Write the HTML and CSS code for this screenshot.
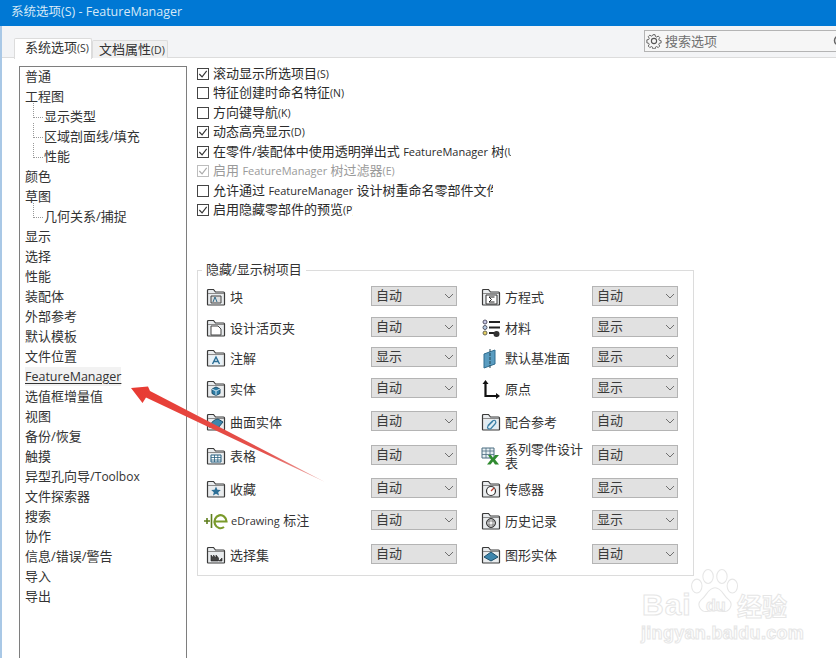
FILE: index.html
```html
<!DOCTYPE html>
<html lang="zh-CN">
<head>
<meta charset="utf-8">
<title>系统选项(S) - FeatureManager</title>
<link rel="stylesheet" href="styles.css">
</head>
<body>
<svg class="defs" width="0" height="0" aria-hidden="true">
  <defs>
    <symbol id="folder" viewBox="0 0 20 18">
      <path d="M1.500 16.500V2.500q0-1 1-1h5l2 2.500h8q1 0 1 1v11.500q0 .5-.5.5H2q-.5 0-.5-.5z" fill="#e9ecee" stroke="#3a3a3a" stroke-width="1.200"/>
      <path d="M2 5.500h16" stroke="#8a8a8a" stroke-width="1"/>
    </symbol>
    <symbol id="chev" viewBox="0 0 10 6">
      <path d="M1 1l4 4 4-4" fill="none" stroke="#6f6f6f" stroke-width="1"/>
    </symbol>
    <symbol id="tick" viewBox="0 0 13 13">
      <path d="M2.500 6.500l3 3.200 5-6.500" fill="none" stroke="currentColor" stroke-width="1.200"/>
    </symbol>
  </defs>
</svg>

<div class="window">
  <header class="titlebar">系统选项(S) - FeatureManager</header>
  <div class="tabband">
    <div class="tabs">
      <div class="tab tab-active">系统选项<small>(S)</small></div>
      <div class="tab">文档属性<small>(D)</small></div>
    </div>
    <div class="search">
      <svg class="gear" viewBox="0 0 16 16"><path d="M6.800 1h2.400l.4 2 1.300.6 1.800-1.100 1.700 1.700-1.100 1.800.6 1.300 2 .4v2.400l-2 .4-.6 1.300 1.100 1.800-1.700 1.700-1.800-1.100-1.300.6-.4 2H6.800l-.4-2-1.300-.6-1.800 1.100-1.700-1.700 1.100-1.800-.6-1.300-2-.4V6.700l2-.4.6-1.300-1.100-1.800 1.700-1.700 1.800 1.100 1.300-.6z" fill="none" stroke="#555" stroke-width="1" transform="translate(.8 .8) scale(.9)"/><circle cx="8" cy="8" r="2.600" fill="none" stroke="#555" stroke-width="1.100"/></svg>
      <span>搜索选项</span>
      <svg class="mag" viewBox="0 0 3 12"><circle cx="6" cy="5.500" r="4.500" fill="none" stroke="#666" stroke-width="1.500"/></svg>
    </div>
  </div>

  <main class="content">
    <nav class="tree">
      <div class="node">普通</div>
      <div class="node">工程图</div>
      <div class="node child">显示类型</div>
      <div class="node child">区域剖面线/填充</div>
      <div class="node child last">性能</div>
      <div class="node">颜色</div>
      <div class="node">草图</div>
      <div class="node child last">几何关系/捕捉</div>
      <div class="node">显示</div>
      <div class="node">选择</div>
      <div class="node">性能</div>
      <div class="node">装配体</div>
      <div class="node">外部参考</div>
      <div class="node">默认模板</div>
      <div class="node">文件位置</div>
      <div class="node selected"><span>FeatureManager</span></div>
      <div class="node">选值框增量值</div>
      <div class="node">视图</div>
      <div class="node">备份/恢复</div>
      <div class="node">触摸</div>
      <div class="node">异型孔向导/<span class="en-tree">Toolbox</span></div>
      <div class="node">文件探索器</div>
      <div class="node">搜索</div>
      <div class="node">协作</div>
      <div class="node">信息/错误/警告</div>
      <div class="node">导入</div>
      <div class="node">导出</div>
    </nav>

    <section class="options">
      <div class="checks">
        <div class="check"><i class="box"><svg viewBox="0 0 13 13"><use href="#tick"/></svg></i><span>滚动显示所选项目<small>(S)</small></span></div>
        <div class="check"><i class="box"></i><span>特征创建时命名特征<small>(N)</small></span></div>
        <div class="check"><i class="box"></i><span>方向键导航<small>(K)</small></span></div>
        <div class="check"><i class="box"><svg viewBox="0 0 13 13"><use href="#tick"/></svg></i><span>动态高亮显示<small>(D)</small></span></div>
        <div class="check"><i class="box"><svg viewBox="0 0 13 13"><use href="#tick"/></svg></i><span class="clip clip-a">在零件/装配体中使用透明弹出式 <span class="en">FeatureManager</span> 树<small>(U)</small></span></div>
        <div class="check disabled"><i class="box"><svg viewBox="0 0 13 13"><use href="#tick"/></svg></i><span>启用 <span class="en">FeatureManager</span> 树过滤器<small>(E)</small></span></div>
        <div class="check"><i class="box"></i><span class="clip clip-b">允许通过 <span class="en">FeatureManager</span> 设计树重命名零部件文件</span></div>
        <div class="check"><i class="box"><svg viewBox="0 0 13 13"><use href="#tick"/></svg></i><span class="clip clip-c">启用隐藏零部件的预览<small>(P)</small></span></div>
      </div>

      <fieldset class="group">
        <legend>隐藏/显示树项目</legend>
        <div class="grid">
          <div class="item"><svg class="ico"><use href="#folder"/><path d="M5 8h10v7H5z" fill="#ddd" stroke="#444"/><path d="M7 14l2-5 2 5" fill="none" stroke="#2d6a8a"/></svg><span class="lab">块</span><div class="sel">自动<svg><use href="#chev"/></svg></div></div>
          <div class="item"><svg class="ico"><use href="#folder"/><path d="M5 7h11v9H5z" fill="#fff" stroke="#333"/><path d="M13.500 9H8l2.500 2.500L8 14h5.500" fill="none" stroke="#222"/></svg><span class="lab">方程式</span><div class="sel">自动<svg><use href="#chev"/></svg></div></div>

          <div class="item"><svg class="ico"><use href="#folder"/><path d="M5 7h7l3 3v6H5z" fill="#fff" stroke="#444"/></svg><span class="lab">设计活页夹</span><div class="sel">自动<svg><use href="#chev"/></svg></div></div>
          <div class="item"><svg class="ico"><circle cx="4" cy="3" r="2" fill="#c8c8e8" stroke="#556"/><circle cx="4" cy="8.500" r="2" fill="#b8d0e8" stroke="#556"/><circle cx="4" cy="14" r="2" fill="#e8d060" stroke="#665"/><path d="M8 3h11M8 8.500h11M8 14h5" stroke="#222" stroke-width="2"/><circle cx="15.500" cy="15" r="3" fill="#333"/></svg><span class="lab">材料</span><div class="sel">显示<svg><use href="#chev"/></svg></div></div>

          <div class="item"><svg class="ico"><use href="#folder"/><path d="M4 7h12v9H4z" fill="#e8f2f8"/><path d="M6.500 15l3.500-7 3.500 7M8 12.500h4" fill="none" stroke="#2d6f96" stroke-width="1.400"/></svg><span class="lab">注解</span><div class="sel">显示<svg><use href="#chev"/></svg></div></div>
          <div class="item"><svg class="ico"><path d="M3 5l11-4v14L3 19z" fill="#5a9cc0" stroke="#2f6d90"/><path d="M9 0v19" stroke="#245" stroke-dasharray="3 1"/></svg><span class="lab">默认基准面</span><div class="sel">显示<svg><use href="#chev"/></svg></div></div>

          <div class="item"><svg class="ico"><use href="#folder"/><path d="M10 7l4 2v4.500l-4 2-4-2V9z" fill="#2e7ea8" stroke="#1d4f6a"/><path d="M6 9l4 2 4-2M10 11v4.500" fill="none" stroke="#cfe6f2"/></svg><span class="lab">实体</span><div class="sel">自动<svg><use href="#chev"/></svg></div></div>
          <div class="item"><svg class="ico"><path d="M4.500 2v14H16" fill="none" stroke="#111" stroke-width="2.200"/><path d="M4.500 0l-3 4h6zM19 16l-4-3v6z" fill="#111"/></svg><span class="lab">原点</span><div class="sel">显示<svg><use href="#chev"/></svg></div></div>

          <div class="item"><svg class="ico"><use href="#folder"/><path d="M3 14q4-8 9-8l5 3-5 6z" fill="#3e86ad" stroke="#1d4f6a"/></svg><span class="lab">曲面实体</span><div class="sel">自动<svg><use href="#chev"/></svg></div></div>
          <div class="item"><svg class="ico"><use href="#folder"/><path d="M4 7h12v9H4z" fill="#dfecf3"/><path d="M7 12.500l4.500-4.500q2-1.500 3 0t-.5 3L10 15.500q-2 1-3 0t0-2.500l5-5" fill="none" stroke="#3a7ea4" stroke-width="1.200"/></svg><span class="lab">配合参考</span><div class="sel">自动<svg><use href="#chev"/></svg></div></div>

          <div class="item"><svg class="ico"><use href="#folder"/><path d="M5 8h10v7H5z" fill="#fff" stroke="#245f80"/><path d="M5 10.500h10M5 13h10M8.500 8v7M11.800 8v7" stroke="#245f80" stroke-width=".8"/></svg><span class="lab">表格</span><div class="sel">自动<svg><use href="#chev"/></svg></div></div>
          <div class="item"><svg class="ico"><path d="M1 1h12v10H1z" fill="#e8f0f4" stroke="#4b6d80"/><path d="M1 4h12M1 7.500h12M5 1v10M9 1v10" stroke="#4b6d80" stroke-width=".8"/><path d="M7 8h3l2 3 2-3h4l-4 4.500 4 5h-4l-2-3-2.500 3H6l4-5z" fill="#2f8a2f"/></svg><span class="lab lab-wrap">系列零件设计表</span><div class="sel">自动<svg><use href="#chev"/></svg></div></div>

          <div class="item"><svg class="ico"><use href="#folder"/><path d="M10 6.500l1.400 3.200 3.400.3-2.600 2.200.8 3.300-3-1.800-3 1.800.8-3.300L5.200 10l3.400-.3z" fill="#2d6f96"/></svg><span class="lab">收藏</span><div class="sel">自动<svg><use href="#chev"/></svg></div></div>
          <div class="item"><svg class="ico"><use href="#folder"/><circle cx="10" cy="11" r="4.500" fill="#fff" stroke="#333" stroke-width="1.200"/><path d="M10 11l3-3" stroke="#c03a2a" stroke-width="1.200"/></svg><span class="lab">传感器</span><div class="sel">显示<svg><use href="#chev"/></svg></div></div>

          <div class="item"><svg class="ico ico-e" viewBox="0 0 24 20"><path d="M0 10h6M3 7v6M7.500 3v14" stroke="#5d7d1c" stroke-width="1.600" fill="none"/><path d="M11 10.500h11.500a6 6.500 0 1 0-2.500 5.500" fill="none" stroke="#7a9a2a" stroke-width="2.200"/></svg><span class="lab lab-e"><span class="en">eDrawing</span> 标注</span><div class="sel">自动<svg><use href="#chev"/></svg></div></div>
          <div class="item"><svg class="ico"><use href="#folder"/><circle cx="10" cy="11" r="4.500" fill="#999" stroke="#333"/><circle cx="10" cy="11" r="1.200" fill="#fff"/><path d="M10 7v8M6 11h8" stroke="#eee" stroke-width=".8"/></svg><span class="lab">历史记录</span><div class="sel">显示<svg><use href="#chev"/></svg></div></div>

          <div class="item"><svg class="ico"><use href="#folder"/><path d="M5 15V9l2.500 3V9l2.500 3V9l2.500 3v3zM13 15l3-3v3z" fill="#444" stroke="#222" stroke-width=".6"/></svg><span class="lab">选择集</span><div class="sel">自动<svg><use href="#chev"/></svg></div></div>
          <div class="item"><svg class="ico"><use href="#folder"/><path d="M3 11l7-5 7 5-7 4z" fill="#3e86ad" stroke="#1d4f6a"/></svg><span class="lab">图形实体</span><div class="sel">自动<svg><use href="#chev"/></svg></div></div>
        </div>
      </fieldset>
    </section>
  </main>
</div>

<svg class="arrow" viewBox="0 0 836 658" aria-hidden="true">
  <defs>
    <linearGradient id="arrowfill" gradientUnits="userSpaceOnUse" x1="131" y1="388" x2="325" y2="482">
      <stop offset="0" stop-color="#e83a32"/><stop offset=".7" stop-color="#e4534e"/><stop offset="1" stop-color="#eeb5b2"/>
    </linearGradient>
  </defs>
  <path d="M131 388L148 386.500 150 391 325 482 146 397.500 142.500 403z" fill="url(#arrowfill)"/>
</svg>

<div class="watermark" aria-hidden="true">
  <svg class="paw" viewBox="0 0 60 56"><ellipse cx="9" cy="20" rx="6" ry="8"/><ellipse cx="22" cy="9" rx="6" ry="8"/><ellipse cx="38" cy="9" rx="6" ry="8"/><ellipse cx="50" cy="20" rx="6" ry="8"/><path d="M30 22c8 0 10 10 16 14 6 6 0 15-8 13-5-1-11-1-16 0-8 2-14-7-8-13 6-4 8-14 16-14z"/></svg>
  <span class="wm-bai">Bai</span><span class="wm-du">du</span><span class="wm-cn">经验</span>
  <span class="wm-url">jingyan.baidu.com</span>
</div>
</body>
</html>
```

FILE: styles.css
```css
* { box-sizing: border-box; }
html, body { margin: 0; height: 100%; }
body {
  width: 836px; height: 658px; overflow: hidden; position: relative;
  background: #fff; color: #2b2b2b;
  font: 13px/20px "Open Sans", "Noto Sans CJK SC", sans-serif;
}
.defs { position: absolute; }
small { font-size: 10.500px; }
.en { font-size: 11px; }
.en-tree { font-size: 12px; }

.window { height: 658px; display: flex; flex-direction: column; border-left: 2px solid #a9c8e6; }
.titlebar {
  height: 26px; flex: none; margin-left: -2px; padding: 0 0 0 11px;
  background: #0078d4; color: #d5e8f7; font-size: 12.500px; line-height: 23px;
}
.tabband {
  height: 32px; flex: none; background: #f3f4f6; border-bottom: 1px solid #dcdcdc;
  display: flex; justify-content: space-between; align-items: flex-start;
}
.tabs { display: flex; align-items: flex-end; height: 32px; padding-left: 12px; }
.tab {
  width: 76px; height: 18px; line-height: 16px; padding-left: 6px;
  border: 1px solid #dcdcdc; border-bottom: 0; background: #f0f0f0;
  border-radius: 2px 2px 0 0; color: #333; white-space: nowrap;
}
.tab-active { width: 78px; height: 21px; line-height: 17px; padding-left: 10px; background: #fff; position: relative; top: 1px; }
.search {
  width: 192px; height: 22px; margin-top: 4px; padding-left: 1px;
  display: flex; align-items: center; gap: 3px;
  background: #f6f6f6; border: 1px solid #b4b4b4; border-right: 0;
  color: #707070; line-height: 20px;
}
.gear { width: 16px; height: 16px; }
.mag { width: 3px; height: 12px; margin-left: auto; }

.content { flex: 1; min-height: 0; display: flex; padding: 8px 0 0 17px; gap: 10px; background: #fff; }
.tree {
  width: 168px; flex: none; height: 600px; padding: 0 0 0 5px;
  border: 1px solid #7e7e7e; color: #333;
}
.node { height: 20px; line-height: 19px; white-space: nowrap; position: relative; }
.child { padding-left: 19px; }
.child::before {
  content: ""; position: absolute; left: 8px; top: -4px; width: 9px; height: 14px;
  border-left: 1px dotted #999; border-bottom: 1px dotted #999;
}
.selected span { display: inline-block; font-size: 12.500px; background: #f2f2f2; line-height: 19px; text-decoration: underline; text-underline-offset: 2px; }

.options { flex: 1; min-width: 0; display: flex; flex-direction: column; }
.checks { height: 197px; margin-top: -2px; display: flex; flex-direction: column; flex: none; }
.check { height: 19.500px; flex: none; display: flex; align-items: center; gap: 4px; white-space: nowrap; line-height: 19px; }
.box {
  width: 12px; height: 12px; flex: none; border: 1px solid #444; background: #fff;
  color: #333; display: block; position: relative;
}
.box svg { position: absolute; left: -1px; top: -1px; width: 12px; height: 12px; }
.disabled { color: #9a9a9a; }
.disabled .box { border-color: #bdbdbd; color: #aaa; }
.clip { display: inline-block; overflow: hidden; }
.clip-a { width: 298px; }
.clip-b { width: 280px; }
.clip-c { width: 140px; }

.group {
  width: 497px; height: 315px; flex: none; margin: 0; padding: 7px 0 0 0; min-width: 0;
  border: 1px solid #dcdcdc;
}
.group legend { margin-left: 4px; padding: 0 4px 2px 4px; line-height: 16px; color: #333; }
.grid {
  display: grid; grid-template-columns: 259px 205px; column-gap: 16px;
  grid-template-rows: 31px 30px 31px 33px 34px 33px 32px 34px 20px;
}
.item { display: flex; align-items: center; height: 20px; position: relative; }
.ico { width: 20px; height: 18px; flex: none; margin: 2px 0 0 8px; overflow: visible; }
.ico-e { width: 24px; height: 20px; margin-left: 6px; }
.lab { width: 0; flex: 1; padding-left: 4px; margin-top: 1px; white-space: nowrap; line-height: 14px; color: #333; }
.lab-wrap { white-space: normal; padding-right: 2px; margin-top: 2px; }
.lab-e { padding-left: 3px; }
.sel {
  width: 86px; height: 20px; flex: none; padding-left: 4px; position: relative;
  background: #e1e1e1; border: 1px solid #b4b4b4; color: #3a3a3a; line-height: 17px;
}
.sel svg { position: absolute; right: 2px; top: 6px; width: 10px; height: 6px; }

.arrow { position: absolute; left: 0; top: 0; width: 836px; height: 658px; pointer-events: none; }

.watermark { position: absolute; left: 640px; top: 565px; width: 160px; height: 80px; pointer-events: none; }
.watermark span { position: absolute; color: #fff; -webkit-text-stroke: 1px #e6e6e6; font-family: "Liberation Sans", "Noto Sans CJK SC", sans-serif; font-weight: 700; white-space: nowrap; }
.paw { position: absolute; left: 49px; top: 3px; width: 52px; height: 50px; fill: #fff; stroke: #e6e6e6; stroke-width: 1.200; }
.wm-bai { left: 2px; top: 24px; font-size: 30px; line-height: 32px; letter-spacing: 1px; }
.wm-du { left: 66px; top: 32px; font-size: 16px; line-height: 18px; }
.wm-cn { left: 97px; top: 28px; font-size: 25px; line-height: 28px; }
.wm-url { left: 1px; top: 58px; font-size: 18px; line-height: 20px; font-weight: 400; letter-spacing: .3px; }
```
